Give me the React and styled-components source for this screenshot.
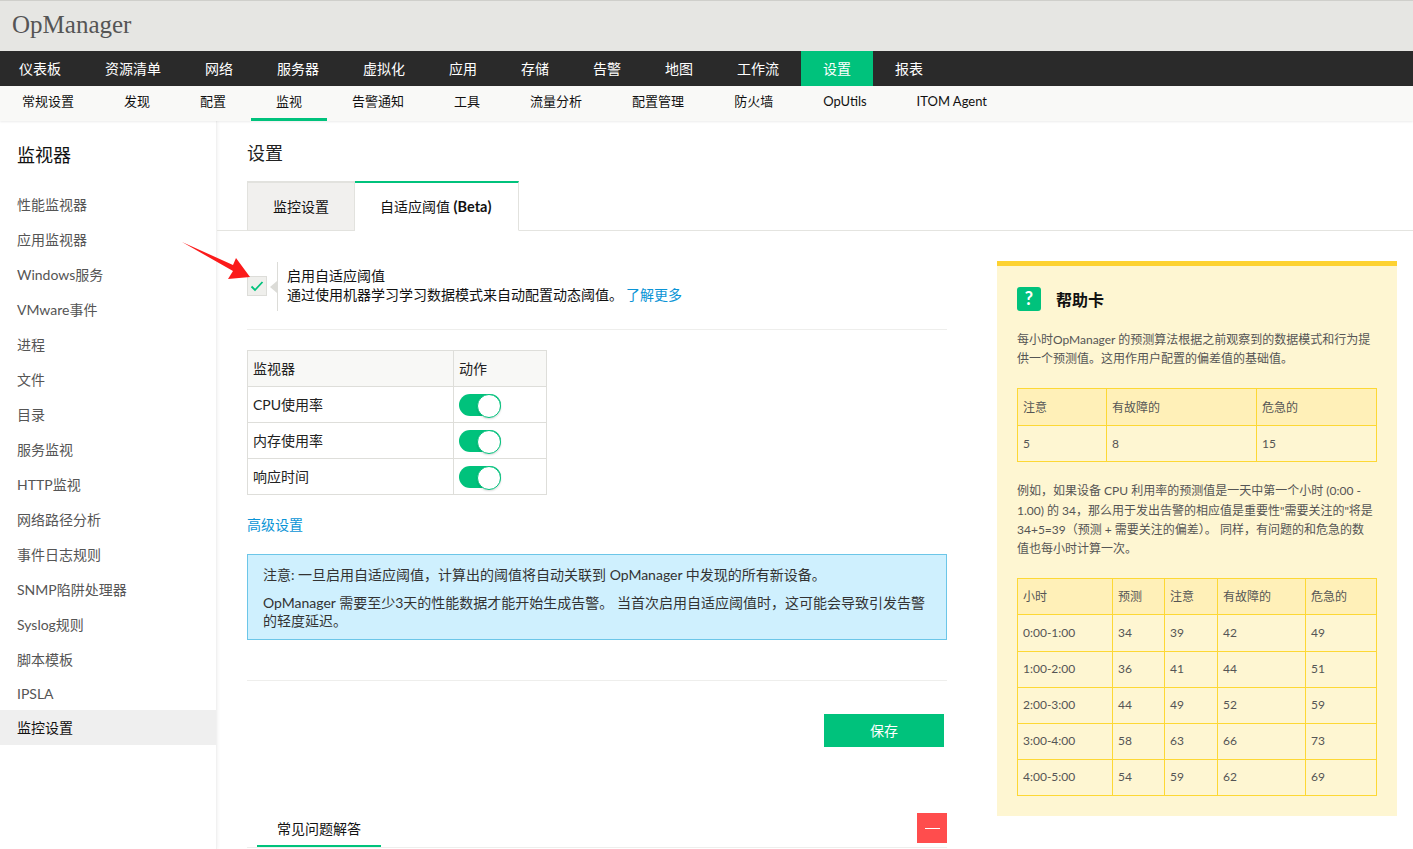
import React from "react";
import styled, { createGlobalStyle } from "styled-components";

const FONT = `Lato, "Noto Sans CJK SC", sans-serif`;
const GREEN = "#00c27c";
const BLUE = "#0a94d6";

const mainNav = ["仪表板", "资源清单", "网络", "服务器", "虚拟化", "应用", "存储", "告警", "地图", "工作流", "设置", "报表"];
const subNav = ["常规设置", "发现", "配置", "监视", "告警通知", "工具", "流量分析", "配置管理", "防火墙", "OpUtils", "ITOM Agent"];
const sideItems = [
  "性能监视器", "应用监视器", "Windows服务", "VMware事件", "进程", "文件", "目录", "服务监视", "HTTP监视",
  "网络路径分析", "事件日志规则", "SNMP陷阱处理器", "Syslog规则", "脚本模板", "IPSLA", "监控设置",
];
const hourRows = [
  ["0:00-1:00", 34, 39, 42, 49],
  ["1:00-2:00", 36, 41, 44, 51],
  ["2:00-3:00", 44, 49, 52, 59],
  ["3:00-4:00", 58, 63, 66, 73],
  ["4:00-5:00", 54, 59, 62, 69],
];

const GlobalStyle = createGlobalStyle`
  html, body {
    margin: 0;
    padding: 0;
    background: #fff;
    font-family: ${FONT};
  }
  * { box-sizing: border-box; }
`;

const Page = styled.div`
  position: relative;
  height: 849px;
  overflow: hidden;
  color: #222;
`;
const Header = styled.div`
  height: 51px;
  padding-left: 12px;
  display: flex;
  align-items: center;
  background: #e6e6e3;
  border-top: 1px solid #cfcfcb;
`;
const Logo = styled.div`
  font-family: "Liberation Serif", serif;
  font-size: 25px;
  color: #555;
  margin-top: -2px;
`;
const MainNav = styled.div`
  height: 35px;
  display: flex;
  padding-left: 19px;
  background: #2a2a2a;
`;
const MainNavItem = styled.div`
  padding: 0 22px;
  line-height: 35px;
  font-size: 14px;
  color: #fff;
  background: ${(props) => (props.$active ? GREEN : "transparent")};
  &:first-child { padding-left: 0; }
`;
const SubNav = styled.div`
  position: relative;
  z-index: 2;
  height: 35px;
  display: flex;
  padding-left: 22px;
  background: #f9f9f7;
  box-shadow: 0 1px 2px rgba(0, 0, 0, 0.08);
`;
const SubNavItem = styled.div`
  padding: 0 25px;
  line-height: 30px;
  font-size: 13px;
  color: #111;
  border-bottom: 3px solid ${(props) => (props.$active ? GREEN : "transparent")};
  &:first-child { padding-left: 0; }
`;
const Body = styled.div`
  display: flex;
  height: 728px;
`;
const Sidebar = styled.div`
  width: 217px;
  flex-shrink: 0;
  border-right: 1px solid #f1f1f1;
  box-shadow: 1px 0 3px rgba(0, 0, 0, 0.05);
`;
const SideTitle = styled.div`
  height: 66px;
  padding: 22px 0 0 17px;
  font-size: 18px;
  line-height: 24px;
  color: #111;
`;
const SideItem = styled.div`
  height: 35px;
  padding-left: 17px;
  font-size: 14px;
  line-height: 35px;
  color: ${(props) => (props.$active ? "#111" : "#555")};
  background: ${(props) => (props.$active ? "#efefef" : "transparent")};
  &:nth-last-child(2), &:nth-last-child(3) {
    height: 34px;
    line-height: 36px;
  }
`;
const Main = styled.div`
  flex: 1;
  min-width: 0;
`;
const PageTitle = styled.div`
  height: 60px;
  padding: 20px 0 0 30px;
  font-size: 18px;
  line-height: 24px;
  color: #222;
`;
const Tabs = styled.div`
  display: flex;
  height: 50px;
  padding-left: 30px;
  border-bottom: 1px solid #e4e4e0;
`;
const Tab = styled.div`
  height: 50px;
  padding: 0 ${(props) => (props.$active ? "27px" : "25px")} 0 25px;
  font-size: 14px;
  line-height: 48px;
  color: #111;
  background: ${(props) => (props.$active ? "#fff" : "#f1f0ee")};
  border-top: 2px solid ${(props) => (props.$active ? GREEN : "#e2e2de")};
  border-left: ${(props) => (props.$active ? "none" : "1px solid #e2e2de")};
  border-right: 1px solid #e2e2de;
  border-bottom: ${(props) => (props.$active ? "1px solid #fff" : "1px solid #e2e2de")};
  b { font-size: 14.5px; }
`;
const Content = styled.div`
  display: flex;
  align-items: flex-start;
  padding: 30px 0 0 30px;
`;
const Left = styled.div`
  width: 700px;
  flex-shrink: 0;
  padding-top: 1px;
`;
const EnableRow = styled.div`
  display: flex;
  height: 49px;
  align-items: center;
`;
const CheckBox = styled.div`
  width: 20px;
  height: 20px;
  margin-top: -1px;
  display: flex;
  align-items: center;
  justify-content: center;
  background: #efefec;
  border: 1px solid #ddddd9;
`;
const Caret = styled.div`
  width: 0;
  height: 0;
  margin-left: 3px;
  border-top: 6px solid transparent;
  border-bottom: 6px solid transparent;
  border-right: 7px solid #dcdcd8;
`;
const EnableText = styled.div`
  height: 49px;
  padding: 4px 0 0 9px;
  border-left: 1px solid #dcdcd8;
  font-size: 14px;
  line-height: 19px;
  color: #111;
`;
const Link = styled.a`
  color: ${BLUE};
  font-size: 14px;
  margin-left: ${(props) => props.$gap || 0}px;
`;
const Rule = styled.div`
  height: 1px;
  background: #eeeeec;
  margin-top: ${(props) => props.$top}px;
`;
const MonitorTable = styled.table`
  width: 299px;
  margin-top: 20px;
  border-collapse: collapse;
  table-layout: fixed;
  font-size: 14px;
  color: #222;
  td, th {
    height: 36px;
    padding: 0 5px 2px;
    border: 1px solid #dededa;
    font-weight: 400;
    text-align: left;
  }
  th { background: #f8f8f6; }
`;
const Toggle = styled.div`
  position: relative;
  width: 42px;
  height: 22px;
  margin-top: 2px;
  border-radius: 11px;
  background: ${GREEN};
  &::after {
    content: "";
    position: absolute;
    top: 0;
    right: 0;
    width: 22px;
    height: 22px;
    border-radius: 50%;
    background: #fff;
    border: 1px solid ${GREEN};
    box-shadow: 0 1px 2px rgba(0, 0, 0, 0.15);
  }
`;
const AdvancedRow = styled.div`
  margin-top: 19px;
  line-height: 20px;
`;
const Notice = styled.div`
  margin-top: 19px;
  height: 86px;
  padding: 11px 15px 0;
  background: #cff0fe;
  border: 1px solid #6cc6e8;
  font-size: 14px;
  line-height: 18px;
  color: #333;
  p { margin: 0 0 10px; }
  p:last-child { margin: 0; }
`;
const Actions = styled.div`
  display: flex;
  justify-content: flex-end;
  padding-right: 3px;
  margin-top: 33px;
`;
const SaveButton = styled.button`
  width: 120px;
  height: 33px;
  padding: 0 0 2px;
  border: none;
  background: ${GREEN};
  color: #fff;
  font-family: ${FONT};
  font-size: 14px;
`;
const FaqBar = styled.div`
  display: flex;
  justify-content: space-between;
  align-items: flex-start;
  height: 35px;
  margin-top: 66px;
  padding-left: 10px;
  border-bottom: 1px solid #eeeeec;
`;
const FaqTab = styled.div`
  width: 124px;
  height: 34px;
  padding-top: 6px;
  text-align: center;
  font-size: 14px;
  line-height: 20px;
  color: #111;
  border-bottom: 2px solid ${GREEN};
`;
const CollapseButton = styled.div`
  width: 30px;
  height: 30px;
  display: flex;
  align-items: center;
  justify-content: center;
  background: #ff4d4d;
  &::after {
    content: "";
    width: 15px;
    height: 1px;
    background: #fff;
  }
`;
const HelpCard = styled.div`
  width: 400px;
  height: 555px;
  margin-left: 50px;
  flex-shrink: 0;
  padding: 21px 20px 0;
  background: #fef6d2;
  border-top: 5px solid #fdd231;
  font-size: 12px;
  color: #555;
`;
const HelpHead = styled.div`
  display: flex;
  align-items: center;
  height: 24px;
`;
const HelpIcon = styled.div`
  width: 24px;
  height: 24px;
  border-radius: 3px;
  background: ${GREEN};
  color: #fff;
  font-size: 18px;
  font-weight: 700;
  line-height: 23px;
  text-align: center;
`;
const HelpTitle = styled.div`
  margin-left: 15px;
  font-size: 16px;
  font-weight: 700;
  color: #111;
`;
const HelpText = styled.p`
  margin: ${(props) => props.$top}px 0 0;
  line-height: 19.2px;
  color: #555;
`;
const HelpTable = styled.table`
  width: 359px;
  margin-top: ${(props) => props.$top}px;
  border-collapse: collapse;
  table-layout: fixed;
  font-size: 12px;
  color: #555;
  td, th {
    height: ${(props) => props.$row}px;
    padding: 0 5px ${(props) => props.$lift}px;
    border: 1px solid #fdd835;
    font-weight: 400;
    text-align: left;
  }
  th { background: #fff0b8; padding-bottom: 2px; }
`;
const ArrowMark = styled.svg`
  position: absolute;
  left: 180px;
  top: 240px;
`;

const Check = () => (
  <svg width="14" height="12" viewBox="0 0 14 12">
    <path d="M1.5 6.5 L5 10 L12.5 2" fill="none" stroke={GREEN} strokeWidth="1.8" />
  </svg>
);

const App = () => {
  return (
    <Page>
      <GlobalStyle />
      <Header>
        <Logo>OpManager</Logo>
      </Header>
      <MainNav>
        {mainNav.map((item) => (
          <MainNavItem key={item} $active={item === "设置"}>
            {item}
          </MainNavItem>
        ))}
      </MainNav>
      <SubNav>
        {subNav.map((item) => (
          <SubNavItem key={item} $active={item === "监视"}>
            {item}
          </SubNavItem>
        ))}
      </SubNav>
      <Body>
        <Sidebar>
          <SideTitle>监视器</SideTitle>
          {sideItems.map((item) => (
            <SideItem key={item} $active={item === "监控设置"}>
              {item}
            </SideItem>
          ))}
        </Sidebar>
        <Main>
          <PageTitle>设置</PageTitle>
          <Tabs>
            <Tab>监控设置</Tab>
            <Tab $active>
              自适应阈值 <b>(Beta)</b>
            </Tab>
          </Tabs>
          <Content>
            <Left>
              <EnableRow>
                <CheckBox>
                  <Check />
                </CheckBox>
                <Caret />
                <EnableText>
                  启用自适应阈值
                  <br />
                  通过使用机器学习学习数据模式来自动配置动态阈值。
                  <Link $gap={3}>了解更多</Link>
                </EnableText>
              </EnableRow>
              <Rule $top={18} />
              <MonitorTable>
                <colgroup>
                  <col width="206" />
                  <col width="93" />
                </colgroup>
                <thead>
                  <tr>
                    <th>监视器</th>
                    <th>动作</th>
                  </tr>
                </thead>
                <tbody>
                  {["CPU使用率", "内存使用率", "响应时间"].map((name) => (
                    <tr key={name}>
                      <td>{name}</td>
                      <td>
                        <Toggle />
                      </td>
                    </tr>
                  ))}
                </tbody>
              </MonitorTable>
              <AdvancedRow>
                <Link>高级设置</Link>
              </AdvancedRow>
              <Notice>
                <p>注意: 一旦启用自适应阈值，计算出的阈值将自动关联到 OpManager 中发现的所有新设备。</p>
                <p>OpManager 需要至少3天的性能数据才能开始生成告警。 当首次启用自适应阈值时，这可能会导致引发告警的轻度延迟。</p>
              </Notice>
              <Rule $top={40} />
              <Actions>
                <SaveButton>保存</SaveButton>
              </Actions>
              <FaqBar>
                <FaqTab>常见问题解答</FaqTab>
                <CollapseButton />
              </FaqBar>
            </Left>
            <HelpCard>
              <HelpHead>
                <HelpIcon>?</HelpIcon>
                <HelpTitle>帮助卡</HelpTitle>
              </HelpHead>
              <HelpText $top={19}>
                每小时OpManager 的预测算法根据之前观察到的数据模式和行为提供一个预测值。这用作用户配置的偏差值的基础值。
              </HelpText>
              <HelpTable $top={20} $row={36.5} $lift={0}>
                <colgroup>
                  <col width="89" />
                  <col width="150" />
                  <col width="120" />
                </colgroup>
                <thead>
                  <tr>
                    <th>注意</th>
                    <th>有故障的</th>
                    <th>危急的</th>
                  </tr>
                </thead>
                <tbody>
                  <tr>
                    <td>5</td>
                    <td>8</td>
                    <td>15</td>
                  </tr>
                </tbody>
              </HelpTable>
              <HelpText $top={19}>
                例如，如果设备 CPU 利用率的预测值是一天中第一个小时 (0:00 - 1.00) 的 34，那么用于发出告警的相应值是重要性"需要关注的"将是 34+5=39（预测 + 需要关注的偏差）。 同样，有问题的和危急的数
                <br />
                值也每小时计算一次。
              </HelpText>
              <HelpTable $top={20} $row={36.2} $lift={2}>
                <colgroup>
                  <col width="95" />
                  <col width="52" />
                  <col width="53" />
                  <col width="88" />
                  <col width="71" />
                </colgroup>
                <thead>
                  <tr>
                    <th>小时</th>
                    <th>预测</th>
                    <th>注意</th>
                    <th>有故障的</th>
                    <th>危急的</th>
                  </tr>
                </thead>
                <tbody>
                  {hourRows.map((row) => (
                    <tr key={row[0]}>
                      {row.map((cell, i) => (
                        <td key={i}>{cell}</td>
                      ))}
                    </tr>
                  ))}
                </tbody>
              </HelpTable>
            </HelpCard>
          </Content>
        </Main>
      </Body>
      <ArrowMark width="72" height="42" viewBox="180 240 72 42">
        <polygon points="182,242 233,265 236,258 250,277 228,279 233,271" fill="#fb1a1a" />
      </ArrowMark>
    </Page>
  );
};

export default App;
